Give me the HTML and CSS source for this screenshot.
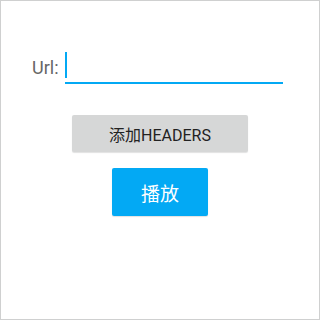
FILE: index.html
```html
<!DOCTYPE html>
<html>
<head>
<meta charset="utf-8">
<link rel="stylesheet" href="styles.css">
</head>
<body>
<div class="screen">
  <div class="url-row">
    <span class="url-label">Url:</span>
    <div class="url-input"><span class="cursor"></span></div>
  </div>
  <div class="btn btn-gray">添加HEADERS</div>
  <div class="btn btn-blue">播放</div>
</div>
</body>
</html>
```
FILE: styles.css
```css
html, body {
  margin: 0;
  padding: 0;
  background: #ffffff;
}
.screen {
  width: 320px;
  height: 320px;
  box-sizing: border-box;
  border: 1px solid #cfd0d0;
  display: flex;
  flex-direction: column;
  align-items: center;
  padding-top: 51px;
  font-family: Roboto, "Noto Sans CJK SC", sans-serif;
}
.url-row {
  align-self: flex-start;
  margin-left: 31px;
  display: flex;
  align-items: flex-start;
  gap: 6px;
}
.url-label {
  font-size: 18px;
  line-height: 22px;
  color: #666666;
  margin-top: 5px;
}
.url-input {
  width: 218px;
  height: 30px;
  border-bottom: 2px solid #03a9f4;
  display: flex;
  align-items: flex-start;
}
.cursor {
  width: 2px;
  height: 26px;
  background: #03a9f4;
}
.btn {
  display: flex;
  align-items: center;
  justify-content: center;
  border-radius: 2px;
}
.btn-gray {
  margin-top: 31px;
  width: 176px;
  height: 37px;
  background: #d6d7d7;
  color: #222222;
  font-size: 16px;
  box-shadow: 0 1px 1px rgba(0,0,0,0.12);
}
.btn-blue {
  margin-top: 16px;
  width: 96px;
  height: 48px;
  background: #03a9f4;
  color: #ffffff;
  font-size: 19px;
  box-shadow: 0 1px 1px rgba(0,0,0,0.12);
}
```
